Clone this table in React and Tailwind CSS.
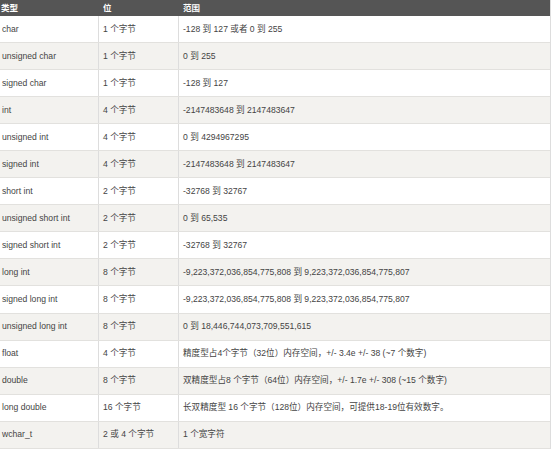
import React from 'react'

const rows = [
    ['char', '1 个字节', '-128 到 127 或者 0 到 255'],
    ['unsigned char', '1 个字节', '0 到 255'],
    ['signed char', '1 个字节', '-128 到 127'],
    ['int', '4 个字节', '-2147483648 到 2147483647'],
    ['unsigned int', '4 个字节', '0 到 4294967295'],
    ['signed int', '4 个字节', '-2147483648 到 2147483647'],
    ['short int', '2 个字节', '-32768 到 32767'],
    ['unsigned short int', '2 个字节', '0 到 65,535'],
    ['signed short int', '2 个字节', '-32768 到 32767'],
    ['long int', '8 个字节', '-9,223,372,036,854,775,808 到 9,223,372,036,854,775,807'],
    ['signed long int', '8 个字节', '-9,223,372,036,854,775,808 到 9,223,372,036,854,775,807'],
    ['unsigned long int', '8 个字节', '0 到 18,446,744,073,709,551,615'],
    ['float', '4 个字节', '精度型占4个字节（32位）内存空间，+/- 3.4e +/- 38 (~7 个数字)'],
    ['double', '8 个字节', '双精度型占8 个字节（64位）内存空间，+/- 1.7e +/- 308 (~15 个数字)'],
    ['long double', '16 个字节', '长双精度型 16 个字节（128位）内存空间，可提供18-19位有效数字。'],
    ['wchar_t', '2 或 4 个字节', '1 个宽字符'],
]

const App = () => {
    return (
        <div
            className="w-[554px] h-[449px] overflow-hidden bg-white text-[#444]"
            style={{ fontFamily: '"Liberation Sans", "Noto Sans CJK SC", sans-serif' }}
        >
            <div className="w-[551px] border-r border-[#ddd]">
                <div className="flex h-[16px] items-center bg-[#555] text-[8.5px] font-bold text-white">
                    <div className="w-[99px] pl-[1px]">类型</div>
                    <div className="w-[80px] pl-[4px]">位</div>
                    <div className="flex-1 pl-[4px]">范围</div>
                </div>
                {rows.map((r, i) => (
                    <div
                        key={r[0]}
                        className={
                            'flex h-[27.06px] items-center border-b border-[#e2e1de] text-[8.6px] ' +
                            (i % 2 === 0 ? 'bg-white' : 'bg-[#f3f2ef]')
                        }
                    >
                        <div className="flex h-full w-[99px] items-center border-r border-[#ddd] pl-[2px]">
                            {r[0]}
                        </div>
                        <div className="flex h-full w-[80px] items-center border-r border-[#ddd] pl-[4px]">
                            {r[1]}
                        </div>
                        <div className="flex h-full flex-1 items-center pl-[4px] whitespace-nowrap">
                            {r[2]}
                        </div>
                    </div>
                ))}
            </div>
        </div>
    )
}

export default App
